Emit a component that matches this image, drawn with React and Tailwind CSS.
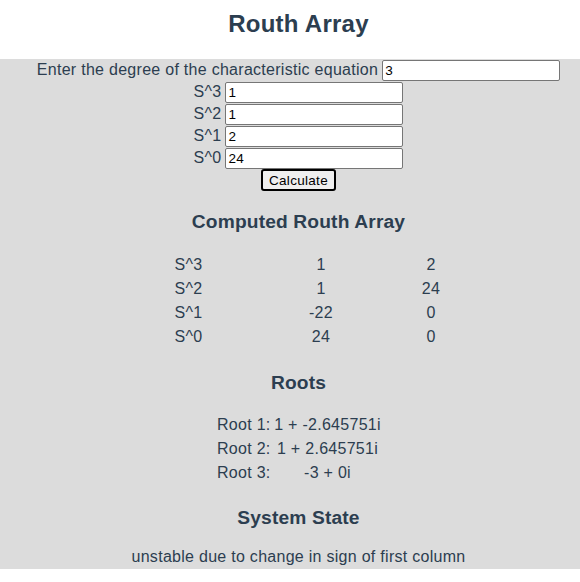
import React, { useState } from "react";

const routhRows = [
  ["S^3", "1", "2"],
  ["S^2", "1", "24"],
  ["S^1", "-22", "0"],
  ["S^0", "24", "0"],
];

const roots = ["1 + -2.645751i", "1 + 2.645751i", "-3 + 0i"];

const App = () => {
  const [degree, setDegree] = useState("3");
  const [coeffs, setCoeffs] = useState(["1", "1", "2", "24"]);

  const handleCoeff = (i, value) => {
    const next = [...coeffs];
    next[i] = value;
    setCoeffs(next);
  };

  const inputClass =
    "w-[178px] h-[21px] border border-[#767676] rounded-[2px] bg-white px-[2px] text-[13.5px] tracking-[0.3px] leading-[normal] text-black outline-none";

  return (
    <div className="min-h-[582px] bg-white text-[#2c3e50] font-['Liberation_Sans',Arial,sans-serif] text-[16px] tracking-[0.28px]">
      <div className="h-[59px] pt-[10px] pl-[17px] text-center">
        <h1 className="text-[24px] leading-[28px] font-bold tracking-[0.25px]">
          Routh Array
        </h1>
      </div>

      <div className="bg-[#dcdcdc] pl-[17px] h-[510px]">
        <div className="flex justify-center items-center gap-[4px] h-[22px]">
          <span className="leading-[18px]">
            Enter the degree of the characteristic equation
          </span>
          <input
            type="text"
            value={degree}
            onChange={(e) => setDegree(e.target.value)}
            className={inputClass}
          />
        </div>

        {coeffs.map((c, i) => (
          <div
            key={i}
            className="flex justify-center items-center gap-[4px] h-[22px]"
          >
            <span className="leading-[18px]">S^{coeffs.length - 1 - i}</span>
            <input
              type="text"
              value={c}
              onChange={(e) => handleCoeff(i, e.target.value)}
              className={inputClass}
            />
          </div>
        ))}

        <div className="flex justify-center h-[22px]">
          <button
            type="button"
            className="w-[75px] h-[22px] border-2 border-black rounded-[3px] bg-[#efefef] text-[13.5px] tracking-[0.3px] leading-[normal] text-black"
          >
            Calculate
          </button>
        </div>

        <h3 className="mt-[19px] text-center text-[19.2px] leading-[24px] font-bold tracking-[0.15px]">
          Computed Routh Array
        </h3>

        <div className="mt-[19px] flex justify-center">
          <div className="grid grid-cols-[107px_158px_62px] text-center">
            {routhRows.map((row) =>
              row.map((cell, j) => (
                <div key={row[0] + j} className="h-[24px] leading-[24px]">
                  {cell}
                </div>
              )),
            )}
          </div>
        </div>

        <h3 className="mt-[22px] text-center text-[19.2px] leading-[24px] font-bold tracking-[0.15px]">
          Roots
        </h3>

        <div className="mt-[18px] flex justify-center">
          <div className="grid grid-cols-[58px_111px]">
            {roots.map((r, i) => (
              <React.Fragment key={i}>
                <div className="h-[24px] leading-[24px] pl-[3px] whitespace-nowrap">
                  Root {i + 1}:
                </div>
                <div className="h-[24px] leading-[24px] text-center whitespace-nowrap">
                  {r}
                </div>
              </React.Fragment>
            ))}
          </div>
        </div>

        <h3 className="mt-[21px] text-center text-[19.2px] leading-[24px] font-bold tracking-[0.15px]">
          System State
        </h3>

        <p className="mt-[15px] text-center leading-[24px]">
          unstable due to change in sign of first column
        </p>
      </div>
    </div>
  );
};

export default App;
